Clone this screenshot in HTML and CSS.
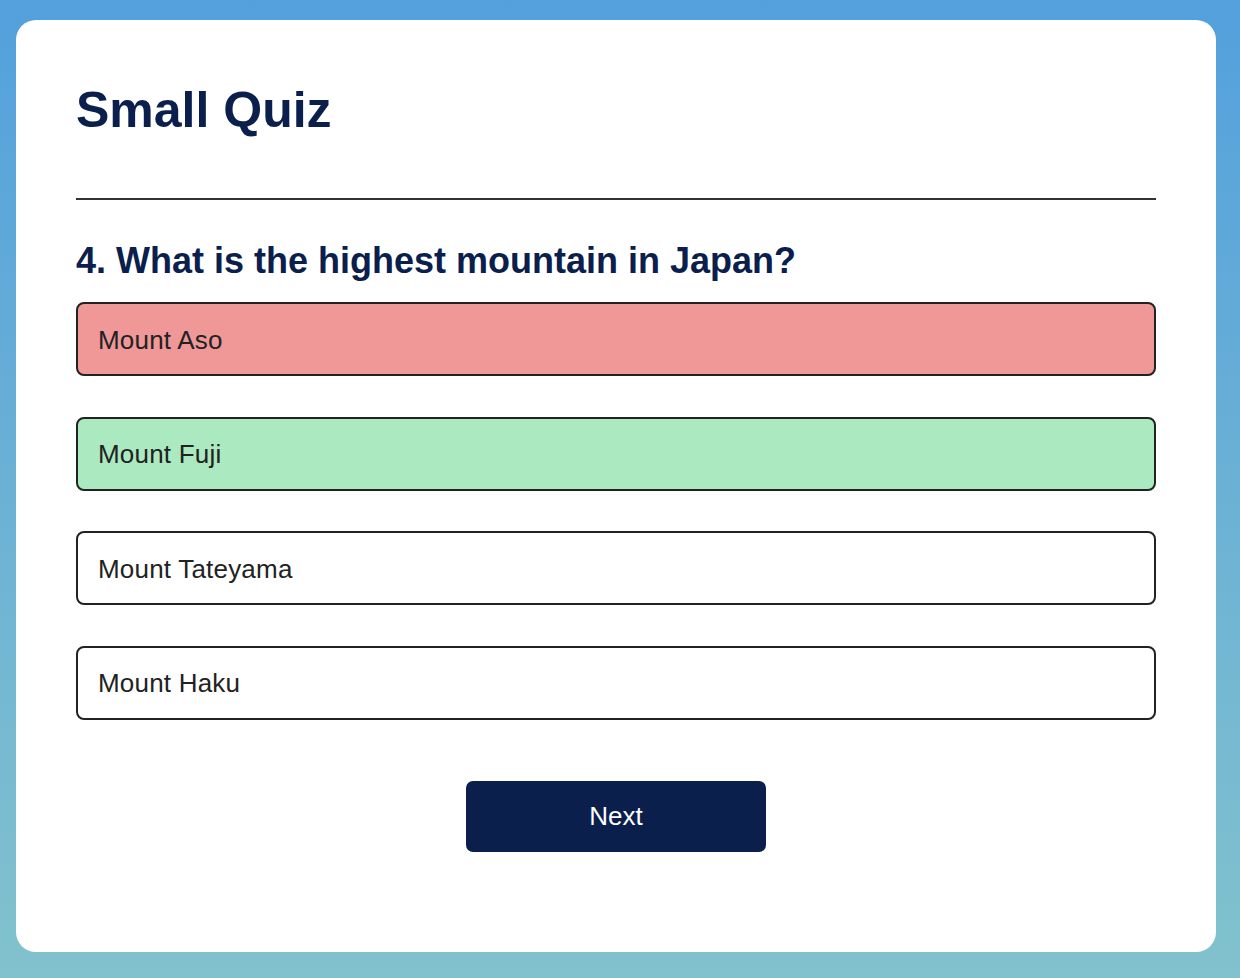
FILE: index.html
```html
<!DOCTYPE html>
<html lang="en">
<head>
<meta charset="utf-8">
<title>Small Quiz</title>
<link rel="stylesheet" href="styles.css">
</head>
<body>
<main class="card">
  <h1 class="title">Small Quiz</h1>
  <hr class="divider">
  <h2 class="question">4. What is the highest mountain in Japan?</h2>
  <ul class="options">
    <li class="option wrong">Mount Aso</li>
    <li class="option correct">Mount Fuji</li>
    <li class="option">Mount Tateyama</li>
    <li class="option">Mount Haku</li>
  </ul>
  <div class="actions">
    <button class="next">Next</button>
  </div>
</main>
</body>
</html>
```

FILE: styles.css
```css
* { box-sizing: border-box; }
html, body { margin: 0; height: 100%; }
body {
  padding: 20px 24px 26px 16px;
  background: linear-gradient(to bottom, #53a0dd, #82c2cd);
  font-family: "Liberation Sans", Arial, Helvetica, sans-serif;
  color: #222;
}
.card {
  width: 1200px;
  height: 932px;
  background: #fff;
  border-radius: 20px;
  padding: 60px;
}
.title {
  margin: 2px 0 0;
  font-size: 50px;
  font-weight: 700;
  color: #0a1f4c;
  line-height: 56px;
}
.divider {
  margin: 60px 0 0;
  border: 0;
  border-top: 2px solid #333;
  height: 0;
}
.question {
  margin: 40px 0 0;
  font-size: 36px;
  font-weight: 700;
  color: #0a1f4c;
  line-height: 42px;
}
.options {
  list-style: none;
  margin: 20px 0 0;
  padding: 0;
  display: flex;
  flex-direction: column;
  gap: 40.6px;
}
.option {
  height: 74px;
  border: 2px solid #222;
  border-radius: 8px;
  padding: 2px 20px 0;
  display: flex;
  align-items: center;
  font-size: 26px;
  letter-spacing: 0.2px;
  background: #fff;
}
.option.wrong { background: #f09897; }
.option.correct { background: #abe9c1; }
.actions {
  display: flex;
  justify-content: center;
  margin-top: 61px;
}
.next {
  width: 300px;
  height: 71px;
  border: 0;
  border-radius: 7px;
  background: #0a1f4c;
  color: #fff;
  font-family: inherit;
  font-size: 26px;
}
```
